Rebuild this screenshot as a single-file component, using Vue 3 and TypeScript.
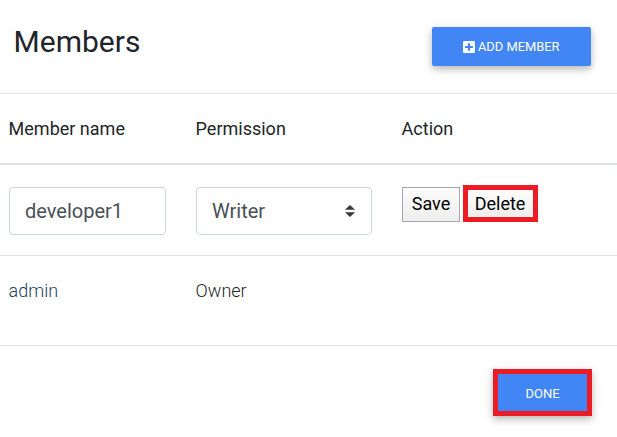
<script setup lang="ts">
import { ref } from 'vue'

const memberName = ref('developer1')
const permission = ref('Writer')
const permissions: string[] = ['Reader', 'Writer', 'Owner']
</script>

<template>
  <main class="members">
    <header class="heading">
      <h1>Members</h1>
      <button class="primary add" type="button">
        <svg class="plus" viewBox="0 0 448 512" aria-hidden="true">
          <path fill="currentColor" d="M400 32H48C21.5 32 0 53.500 0 80v352c0 26.500 21.500 48 48 48h352c26.500 0 48-21.500 48-48V80c0-26.500-21.500-48-48-48zm-32 252c0 6.600-5.400 12-12 12h-92v92c0 6.600-5.400 12-12 12h-56c-6.600 0-12-5.400-12-12v-92H92c-6.600 0-12-5.400-12-12v-56c0-6.600 5.400-12 12-12h92v-92c0-6.600 5.400-12 12-12h56c6.600 0 12 5.400 12 12v92h92c6.600 0 12 5.400 12 12v56z" />
        </svg>
        <span>ADD MEMBER</span>
      </button>
    </header>
    <section class="table">
      <div class="row head">
        <span>Member name</span><span>Permission</span><span>Action</span>
      </div>
      <div class="row edit">
        <input v-model="memberName" class="field" type="text" />
        <div class="select-wrap">
          <select v-model="permission" class="field select">
            <option v-for="p in permissions" :key="p">{{ p }}</option>
          </select>
          <svg class="arrows" viewBox="0 0 4 5" preserveAspectRatio="none" aria-hidden="true">
            <path fill="#343a40" d="M2 0L0 2h4zm0 5L0 3h4z" />
          </svg>
        </div>
        <div class="actions">
          <button class="plain save" type="button">Save</button>
          <button class="plain delete" type="button">Delete</button>
        </div>
      </div>
      <div class="row body">
        <span class="link">admin</span><span>Owner</span>
      </div>
    </section>
    <footer class="footer">
      <button class="primary done" type="button">DONE</button>
    </footer>
  </main>
</template>

<style>
body {
  margin: 0;
  background: #fff;
}
</style>

<style scoped>
.members {
  width: 617px;
  height: 437px;
  overflow: hidden;
  box-sizing: border-box;
  font-family: Roboto, "Liberation Sans", sans-serif;
  font-weight: 300;
  color: #212529;
}
.members * {
  box-sizing: border-box;
}
button,
input,
select {
  font-family: inherit;
  margin: 0;
}
.heading {
  display: flex;
  justify-content: space-between;
  align-items: flex-start;
  height: 93px;
  padding: 24px 26px 0 13.6px;
}
h1 {
  margin: 0;
  font-size: 30px;
  line-height: 36px;
  font-weight: 400;
}
.primary {
  display: flex;
  align-items: center;
  justify-content: center;
  padding: 0;
  border: 0;
  color: #fff;
  background: #4285f4;
  font-size: 13px;
  font-weight: 400;
  box-shadow: 0 3px 6px rgba(0, 0, 0, 0.18), 0 3px 12px rgba(0, 0, 0, 0.13);
}
.add {
  width: 159px;
  height: 39px;
  margin-top: 3px;
  border-radius: 2px;
  gap: 2.5px;
}
.add span {
  font-size: 12.9px;
}
.plus {
  width: 12px;
  height: 14px;
}
.row {
  display: grid;
  grid-template-columns: 187px 206px 1fr;
  align-items: start;
  padding-left: 9px;
  border-top: 1px solid #dee2e6;
  font-size: 18px;
  line-height: 27px;
}
.row > span {
  margin-left: -0.4px;
}
.head {
  height: 70px;
  padding-top: 21px;
  font-weight: 400;
}
.edit {
  height: 92px;
  padding-top: 22px;
  border-top-width: 2px;
}
.body {
  height: 90px;
  padding-top: 21px;
}
.link {
  color: #22405c;
}
.field {
  display: block;
  width: 157px;
  height: 48px;
  padding: 0 15px;
  border: 1px solid #ced4da;
  border-radius: 4px;
  background: #fff;
  color: #495057;
  font-size: 20px;
  font-weight: 400;
  line-height: 30px;
}
.select-wrap {
  position: relative;
  width: 176px;
}
.select {
  width: 100%;
  appearance: none;
}
.arrows {
  position: absolute;
  top: 18px;
  right: 17px;
  width: 10px;
  height: 12px;
  pointer-events: none;
}
.actions {
  display: flex;
  align-items: flex-start;
  gap: 3px;
}
.plain {
  height: 35px;
  padding: 0;
  border: 1px solid #a6a6a6;
  background: linear-gradient(#fdfdfd, #ededed);
  color: #000;
  font-size: 18px;
  line-height: 27px;
  font-weight: 400;
}
.save {
  width: 58px;
  padding-bottom: 2px;
}
.delete {
  width: 75px;
  height: 37px;
  margin-top: -2px;
  padding-right: 1px;
  border: 5px solid #ed1c24;
}
.footer {
  display: flex;
  justify-content: flex-end;
  padding: 23px 25px 0 0;
  border-top: 1px solid #dee2e6;
}
.done {
  width: 99px;
  height: 47px;
  padding-top: 2px;
  border: 5px solid #ed1c24;
}
</style>
